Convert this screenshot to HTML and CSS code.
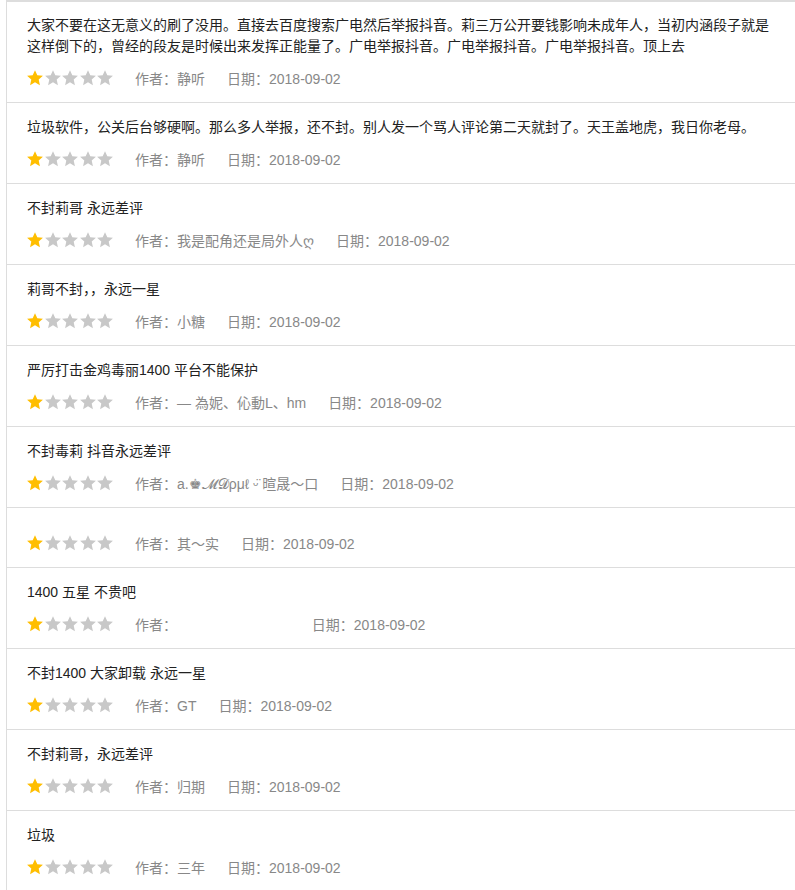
FILE: index.html
```html
<!DOCTYPE html>
<html lang="zh-CN">
<head>
    <meta charset="UTF-8">
    <meta name="viewport" content="width=device-width, initial-scale=1.0">
    <title>用户评论</title>
    <link rel="stylesheet" href="styles.css">
</head>
<body>
    <svg width="0" height="0" class="defs">
        <symbol id="star" viewBox="1.6 1.6 20.8 20.8">
            <path d="M12 1.8l3 6.7 7.3.7-5.5 4.9 1.6 7.2L12 17.6l-6.4 3.7 1.6-7.2-5.5-4.9 7.3-.7z"/>
        </symbol>
    </svg>

    <ul class="review-list">
        <li class="review">
            <p class="review-text">大家不要在这无意义的刷了没用。直接去百度搜索广电然后举报抖音。莉三万公开要钱影响未成年人，当初内涵段子就是这样倒下的，曾经的段友是时候出来发挥正能量了。广电举报抖音。广电举报抖音。广电举报抖音。顶上去</p>
            <div class="meta">
                <span class="stars"><svg class="on"><use href="#star"/></svg><svg><use href="#star"/></svg><svg><use href="#star"/></svg><svg><use href="#star"/></svg><svg><use href="#star"/></svg></span>
                <span>作者：静听</span>
                <span>日期：2018-09-02</span>
            </div>
        </li>
        <li class="review">
            <p class="review-text">垃圾软件，公关后台够硬啊。那么多人举报，还不封。别人发一个骂人评论第二天就封了。天王盖地虎，我日你老母。</p>
            <div class="meta">
                <span class="stars"><svg class="on"><use href="#star"/></svg><svg><use href="#star"/></svg><svg><use href="#star"/></svg><svg><use href="#star"/></svg><svg><use href="#star"/></svg></span>
                <span>作者：静听</span>
                <span>日期：2018-09-02</span>
            </div>
        </li>
        <li class="review">
            <p class="review-text">不封莉哥 永远差评</p>
            <div class="meta">
                <span class="stars"><svg class="on"><use href="#star"/></svg><svg><use href="#star"/></svg><svg><use href="#star"/></svg><svg><use href="#star"/></svg><svg><use href="#star"/></svg></span>
                <span>作者：我是配角还是局外人ღ</span>
                <span>日期：2018-09-02</span>
            </div>
        </li>
        <li class="review">
            <p class="review-text">莉哥不封，，永远一星</p>
            <div class="meta">
                <span class="stars"><svg class="on"><use href="#star"/></svg><svg><use href="#star"/></svg><svg><use href="#star"/></svg><svg><use href="#star"/></svg><svg><use href="#star"/></svg></span>
                <span>作者：小糖</span>
                <span>日期：2018-09-02</span>
            </div>
        </li>
        <li class="review">
            <p class="review-text">严厉打击金鸡毒丽1400 平台不能保护</p>
            <div class="meta">
                <span class="stars"><svg class="on"><use href="#star"/></svg><svg><use href="#star"/></svg><svg><use href="#star"/></svg><svg><use href="#star"/></svg><svg><use href="#star"/></svg></span>
                <span>作者：— 為妮、伈動L、hm</span>
                <span>日期：2018-09-02</span>
            </div>
        </li>
        <li class="review">
            <p class="review-text">不封毒莉 抖音永远差评</p>
            <div class="meta">
                <span class="stars"><svg class="on"><use href="#star"/></svg><svg><use href="#star"/></svg><svg><use href="#star"/></svg><svg><use href="#star"/></svg><svg><use href="#star"/></svg></span>
                <span>作者：a.♚𝓜𝓓ρμℓ ᵕ̈ 暄晟～口</span>
                <span>日期：2018-09-02</span>
            </div>
        </li>
        <li class="review">
            <p class="review-text"></p>
            <div class="meta">
                <span class="stars"><svg class="on"><use href="#star"/></svg><svg><use href="#star"/></svg><svg><use href="#star"/></svg><svg><use href="#star"/></svg><svg><use href="#star"/></svg></span>
                <span>作者：其～实</span>
                <span>日期：2018-09-02</span>
            </div>
        </li>
        <li class="review">
            <p class="review-text">1400 五星 不贵吧</p>
            <div class="meta">
                <span class="stars"><svg class="on"><use href="#star"/></svg><svg><use href="#star"/></svg><svg><use href="#star"/></svg><svg><use href="#star"/></svg><svg><use href="#star"/></svg></span>
                <span>作者：　　　　　　　　&nbsp;&nbsp;</span>
                <span>日期：2018-09-02</span>
            </div>
        </li>
        <li class="review">
            <p class="review-text">不封1400 大家卸载 永远一星</p>
            <div class="meta">
                <span class="stars"><svg class="on"><use href="#star"/></svg><svg><use href="#star"/></svg><svg><use href="#star"/></svg><svg><use href="#star"/></svg><svg><use href="#star"/></svg></span>
                <span>作者：GT</span>
                <span>日期：2018-09-02</span>
            </div>
        </li>
        <li class="review">
            <p class="review-text">不封莉哥，永远差评</p>
            <div class="meta">
                <span class="stars"><svg class="on"><use href="#star"/></svg><svg><use href="#star"/></svg><svg><use href="#star"/></svg><svg><use href="#star"/></svg><svg><use href="#star"/></svg></span>
                <span>作者：归期</span>
                <span>日期：2018-09-02</span>
            </div>
        </li>
        <li class="review">
            <p class="review-text">垃圾</p>
            <div class="meta">
                <span class="stars"><svg class="on"><use href="#star"/></svg><svg><use href="#star"/></svg><svg><use href="#star"/></svg><svg><use href="#star"/></svg><svg><use href="#star"/></svg></span>
                <span>作者：三年</span>
                <span>日期：2018-09-02</span>
            </div>
        </li>
    </ul>
</body>
</html>
```

FILE: styles.css
```css
body {
    margin: 0;
    font-family: "Liberation Sans", "Noto Sans CJK SC", sans-serif;
    font-size: 14px;
    color: #222;
    background-color: #fff;
    overflow: hidden;
}
.defs {
    position: absolute;
}
.review-list {
    list-style: none;
    margin: 0 0 0 6px;
    padding: 0;
    border-left: 1px solid #ddd;
}
.review {
    padding: 14px 20px 14px 20px;
    border-top: 1px solid #ddd;
}
.review:first-child {
    border-top: 2px solid #ddd;
    padding-top: 13px;
}
.review-text {
    margin: 0 0 10px;
    line-height: 21px;
}
.meta {
    display: flex;
    align-items: center;
    gap: 22px;
    height: 21px;
    color: #888;
}
.stars {
    display: flex;
    gap: 1.5px;
}
.stars svg {
    width: 16px;
    height: 16px;
    fill: #c8c8c8;
}
.stars svg.on {
    fill: #ffbe00;
}
```
